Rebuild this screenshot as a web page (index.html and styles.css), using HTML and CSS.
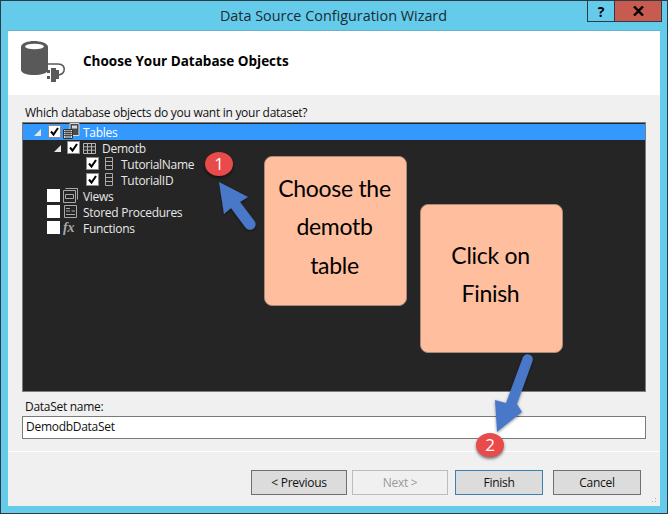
FILE: index.html
```html
<!DOCTYPE html>
<html lang="en">
<head>
<meta charset="utf-8">
<title>Data Source Configuration Wizard</title>
<link rel="stylesheet" href="styles.css">
</head>
<body>
<div class="window">
  <div class="titlebar">
    <span class="title">Data Source Configuration Wizard</span>
    <div class="caption-buttons">
      <span class="cap cap-help">?</span>
      <span class="cap cap-close">
        <svg width="11" height="10" viewBox="0 0 11 10"><path d="M1 .5 5.500 5 1 9.500M10 .5 5.500 5 10 9.500" fill="none" stroke="#000" stroke-width="2.400"/></svg>
      </span>
    </div>
  </div>
  <div class="client">
    <header class="header">
      <svg class="db-icon" width="46" height="42" viewBox="0 0 46 42">
        <path d="M1 7C1 3 8 1 14 1s14 2 14 6v23c0 3-7 5-14 5S1 33 1 30Z" fill="#595959"/>
        <ellipse cx="14.500" cy="6.500" rx="9.500" ry="2.800" fill="#fff"/>
        <path d="M28 24h10c5 0 7 3 6 7-1 3-4 4-7 4" fill="none" stroke="#595959" stroke-width="1.600"/>
        <path d="M27 30h3v3h-3zM27 36h3v3h-3z" fill="#595959"/>
        <path d="M31 28h5v14h-5zM36 30h3v9h-3z" fill="#595959"/>
      </svg>
      <h1 class="heading">Choose Your Database Objects</h1>
    </header>
    <main class="body">
      <label class="field-label tree-label">Which database objects do you want in your dataset?</label>
      <div class="tree">
        <div class="row row-selected indent-0">
          <span class="twisty"></span>
          <span class="check check-on"><svg width="11" height="11" viewBox="0 0 11 11"><path d="M2 5.500 4.500 8.500 9 2" fill="none" stroke="#000" stroke-width="2"/></svg></span>
          <svg class="icon" width="18" height="16" viewBox="0 0 18 16">
            <path d="M7 .5h9v12H7z" fill="#4a4a4a" stroke="#d8d8d8"/>
            <path d="M9 2.500h5v3H9z" fill="#d8d8d8"/>
            <path d="M.5 6.500h9v9h-9z" fill="#d8d8d8" stroke="#333"/>
            <path d="M1 8.500h8M1 10.500h8M1 12.500h8M3 7v8M5 7v8M7 7v8" stroke="#333" stroke-width=".8"/>
          </svg>
          <span class="name">Tables</span>
        </div>
        <div class="row indent-1">
          <span class="twisty"></span>
          <span class="check check-on"><svg width="11" height="11" viewBox="0 0 11 11"><path d="M2 5.500 4.500 8.500 9 2" fill="none" stroke="#000" stroke-width="2"/></svg></span>
          <svg class="icon" width="14" height="16" viewBox="0 0 14 16"><path d="M.5 3.500h12v10H.5zM.5 6.800h12M.5 10.200h12M4.500 3.500v10M8.500 3.500v10" fill="none" stroke="#b5b5b5"/></svg>
          <span class="name">Demotb</span>
        </div>
        <div class="row indent-2">
          <span class="check check-on"><svg width="11" height="11" viewBox="0 0 11 11"><path d="M2 5.500 4.500 8.500 9 2" fill="none" stroke="#000" stroke-width="2"/></svg></span>
          <svg class="icon icon-col" width="9" height="16" viewBox="0 0 9 16"><path d="M.5 1.500h7v12h-7zM.5 5.500h7M.5 9.500h7" fill="none" stroke="#a8a8a8"/></svg>
          <span class="name name-col">TutorialName</span>
        </div>
        <div class="row indent-2">
          <span class="check check-on"><svg width="11" height="11" viewBox="0 0 11 11"><path d="M2 5.500 4.500 8.500 9 2" fill="none" stroke="#000" stroke-width="2"/></svg></span>
          <svg class="icon icon-col" width="9" height="16" viewBox="0 0 9 16"><path d="M.5 1.500h7v12h-7zM.5 5.500h7M.5 9.500h7" fill="none" stroke="#a8a8a8"/></svg>
          <span class="name name-col">TutorialID</span>
        </div>
        <div class="row indent-top">
          <span class="check"></span>
          <svg class="icon" width="15" height="16" viewBox="0 0 15 16"><path d="M2.500 .5h12v11M.5 2.500h12v12H.5zM2.500 6.500h8v4h-8z" fill="none" stroke="#a8a8a8"/></svg>
          <span class="name">Views</span>
        </div>
        <div class="row indent-top">
          <span class="check"></span>
          <svg class="icon" width="15" height="16" viewBox="0 0 15 16"><path d="M1.500 1.500h12v12h-12zM3 4.500h4M3 7h4M3 10.500h9M8.500 7h3.500" fill="none" stroke="#a8a8a8"/></svg>
          <span class="name">Stored Procedures</span>
        </div>
        <div class="row indent-top">
          <span class="check"></span>
          <span class="fx">fx</span>
          <span class="name">Functions</span>
        </div>
      </div>
      <label class="field-label name-label">DataSet name:</label>
      <div class="input">DemodbDataSet</div>
      <div class="separator"></div>
      <footer class="buttons">
        <button class="btn btn-prev">&lt; Previous</button>
        <button class="btn btn-next" disabled>Next &gt;</button>
        <button class="btn btn-finish">Finish</button>
        <button class="btn btn-cancel">Cancel</button>
      </footer>
    </main>
    <span class="grip"></span>
  </div>

  <div class="note note-one">Choose the<br>demotb<br>table</div>
  <div class="note note-two">Click on<br>Finish</div>

  <svg class="arrows" width="668" height="514" viewBox="0 0 668 514">
    <defs><filter id="soft" x="-30%" y="-30%" width="160%" height="160%"><feDropShadow dx="0" dy="1" stdDeviation="1.500" flood-color="#000" flood-opacity=".45"/></filter></defs>
    <g fill="#4a78c8" filter="url(#soft)">
      <path d="M219 182 248 197 240 202 254.500 221a5.500 5.500 0 0 1-9 6.500L231 208 224 214Z"/>
      <path d="M523 357a5.200 5.200 0 0 1 9.500 4L517 404 522 412 497 432 495 400 506 403Z"/>
    </g>
  </svg>
  <div class="badge badge-one">1</div>
  <div class="badge badge-two">2</div>
</div>
</body>
</html>
```
FILE: styles.css
```css
* { box-sizing: border-box; }
html, body { margin: 0; padding: 0; }
body { width: 668px; height: 514px; overflow: hidden; font-family: "Open Sans", "Liberation Sans", sans-serif; font-size: 12px; letter-spacing: -.28px; color: #111; }

.window { position: relative; width: 668px; height: 514px; display: flex; flex-direction: column; background: #65cbea; border: 1px solid #2e3a44; padding: 0 7px 7px; }

.titlebar { height: 30px; flex: none; display: flex; justify-content: center; position: relative; border-bottom: 1px solid #66b2cf; margin: 0 -1px; }
.title { font-size: 14.400px; letter-spacing: 0; line-height: 30px; color: #1a2a35; margin-right: 1px; }
.caption-buttons { position: absolute; top: 0; right: -1px; display: flex; height: 21px; border: 1px solid #2e3a44; border-top: 0; }
.cap { display: flex; align-items: center; justify-content: center; height: 100%; }
.cap-help { width: 27px; font-weight: 700; font-size: 14px; color: #000; border-right: 1px solid #2e3a44; }
.cap-close { width: 46px; background: #c75b50; }

.client { flex: 1; min-height: 0; position: relative; display: flex; flex-direction: column; background: #f0f0f0; }

.header { height: 64px; flex: none; display: flex; align-items: flex-start; background: #fff; padding: 9px 0 0 12px; }
.db-icon { flex: none; }
.heading { margin: 12px 0 0 17px; font-size: 13.500px; letter-spacing: 0; font-weight: 700; line-height: 18px; color: #000; }

.body { flex: 1; min-height: 0; display: flex; flex-direction: column; padding: 9px 0 0 14px; }
.field-label { display: block; line-height: 17px; color: #111; padding-left: 3px; }
.tree-label { height: 18px; }

.tree { width: 624px; height: 270px; flex: none; background: #252525; border: 1px solid #7c7c84; padding-top: 1px; color: #e8e8e8; }
.row { display: flex; align-items: center; height: 16px; line-height: 16px; }
.row-selected { background: #3399ff; color: #fff; }
.indent-0 { padding-left: 11px; }
.indent-1 { padding-left: 29px; }
.indent-2 { padding-left: 62px; }
.indent-top { padding-left: 24px; }

.twisty { width: 0; height: 0; border-style: solid; border-width: 0 0 7px 7px; border-color: transparent transparent #e6e6e6 transparent; flex: none; }
.indent-0 .twisty { margin-right: 7px; }
.indent-1 .twisty { margin: 0 6px 0 2px; }
.check { width: 13px; height: 13px; margin-top: -1px; background: #fff; flex: none; display: flex; align-items: center; justify-content: center; }
.check-on { border: 1px solid #8d8d8d; }
.indent-2 .check { margin-left: 1px; }
.icon { flex: none; margin-left: 3px; }
.indent-0 .icon { margin-left: 2px; margin-top: -2px; }
.name { margin-left: 5px; padding-top: 2px; }
.indent-0 .name { margin-left: 2px; }
.indent-1 .name { margin-left: 5px; }
.name-col { margin-left: 7px; }
.icon-col { margin-left: 6px; }
.fx { width: 15px; margin-left: 3px; font-family: "Liberation Serif", serif; font-style: italic; font-weight: 700; font-size: 14px; color: #a8a8a8; flex: none; }

.name-label { margin-top: 6px; height: 18px; }
.input { width: 624px; height: 23px; flex: none; background: #fff; border: 1px solid #7a7a7a; padding-left: 3px; line-height: 19px; color: #111; }
.separator { height: 1px; flex: none; margin: 12px 0 0 -14px; background: #fff; }

.buttons { display: flex; padding: 18px 0 0 229px; }
.btn { height: 25px; padding: 0 0 1px; font: 12px "Open Sans", "Liberation Sans", sans-serif; letter-spacing: -.28px; color: #111; background: #dcdcdc; border: 1px solid #707070; border-radius: 0; }
.btn-prev { width: 96px; }
.btn-next { width: 96px; margin-left: 5px; background: #f0f0f0; border-color: #bcbcbc; color: #9a9a9a; }
.btn-finish { width: 88px; margin-left: 7px; border-color: #3c7fb1; }
.btn-cancel { width: 88px; margin-left: 10px; }

.grip { position: absolute; right: 2px; bottom: 2px; width: 10px; height: 10px; background: radial-gradient(circle, #b0b0b0 1px, transparent 1px) 0 0 / 3px 3px; clip-path: polygon(100% 0, 100% 100%, 0 100%); }

.note { position: absolute; width: 143px; padding: 0 2px 9px 0; background: #ffbf9f; border: 1px solid #a68a7a; border-radius: 8px; display: flex; align-items: center; justify-content: center; text-align: center; font-family: "Lato", sans-serif; font-size: 23px; letter-spacing: -.3px; line-height: 38.500px; color: #000; }
.note-one { left: 263px; top: 155px; height: 150px; }
.note-two { left: 419px; top: 203px; height: 149px; }

.arrows { position: absolute; left: -1px; top: -1px; pointer-events: none; }

.badge { position: absolute; display: flex; align-items: center; justify-content: center; width: 28px; height: 24px; border-radius: 50%; background: #e94a4a; color: #fff; font-size: 17px; letter-spacing: 0; line-height: 24px; box-shadow: 0 2px 3px rgba(0, 0, 0, .5); }
.badge-one { left: 204px; top: 151px; }
.badge-two { left: 475px; top: 432px; }
```
